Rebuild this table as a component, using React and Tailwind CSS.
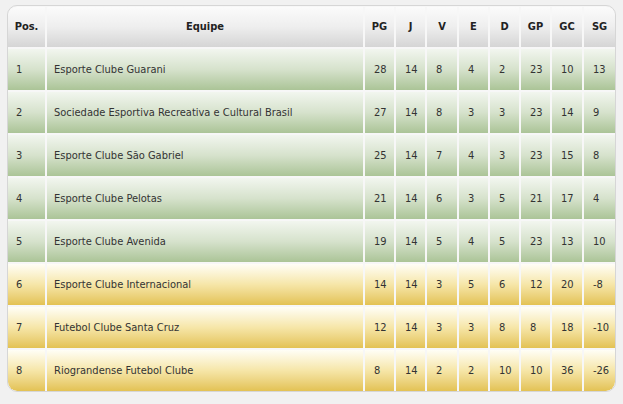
import React from "react";

const teams = [
  { pos: 1, name: "Esporte Clube Guarani", pg: 28, j: 14, v: 8, e: 4, d: 2, gp: 23, gc: 10, sg: 13 },
  { pos: 2, name: "Sociedade Esportiva Recreativa e Cultural Brasil", pg: 27, j: 14, v: 8, e: 3, d: 3, gp: 23, gc: 14, sg: 9 },
  { pos: 3, name: "Esporte Clube São Gabriel", pg: 25, j: 14, v: 7, e: 4, d: 3, gp: 23, gc: 15, sg: 8 },
  { pos: 4, name: "Esporte Clube Pelotas", pg: 21, j: 14, v: 6, e: 3, d: 5, gp: 21, gc: 17, sg: 4 },
  { pos: 5, name: "Esporte Clube Avenida", pg: 19, j: 14, v: 5, e: 4, d: 5, gp: 23, gc: 13, sg: 10 },
  { pos: 6, name: "Esporte Clube Internacional", pg: 14, j: 14, v: 3, e: 5, d: 6, gp: 12, gc: 20, sg: -8 },
  { pos: 7, name: "Futebol Clube Santa Cruz", pg: 12, j: 14, v: 3, e: 3, d: 8, gp: 8, gc: 18, sg: -10 },
  { pos: 8, name: "Riograndense Futebol Clube", pg: 8, j: 14, v: 2, e: 2, d: 10, gp: 10, gc: 36, sg: -26 },
];

const headers = ["Pos.", "Equipe", "PG", "J", "V", "E", "D", "GP", "GC", "SG"];

export default function App() {
  return (
    <div className="min-h-[404px] w-[623px] bg-[#f1f1f1] pt-[5px] pl-[7px] font-['DejaVu_Sans_Condensed','DejaVu_Sans',sans-serif] text-[11px] text-[#333]">
      <div className="w-[609px] rounded-[10px] border border-[#d6d6d6] bg-[#f7f7f7] pt-[1px] overflow-hidden">
        <div className="grid grid-cols-[37px_316px_29px_29px_30px_29px_29px_29px_30px_31px] gap-[2px]">
          {/* Header */}
          {headers.map((h, i) => (
            <div
              key={h}
              className={
                "h-[40px] flex items-center justify-center font-bold text-[#222] bg-linear-to-b from-[#fbfbfb] via-[#eeeeee] to-[#d5d5d5] " +
                (i === 0 ? "rounded-tl-[9px]" : "") +
                (i === headers.length - 1 ? "rounded-tr-[9px]" : "")
              }
            >
              {h}
            </div>
          ))}

          {/* Rows */}
          {teams.map((t, r) => {
            const green = t.pos <= 5;
            const bg = green
              ? "bg-linear-to-b from-[#f2f6ef] via-[#d6e2cc] to-[#abc497]"
              : "bg-linear-to-b from-[#fffef6] via-[#f6e6a8] to-[#e3c253]";
            const last = r === teams.length - 1;
            const vals = [t.pos, t.name, t.pg, t.j, t.v, t.e, t.d, t.gp, t.gc, t.sg];
            return vals.map((v, i) => (
              <div
                key={t.pos + "-" + i}
                className={
                  "h-[41px] flex items-center pt-[1px] whitespace-nowrap " +
                  bg +
                  (i === 1 ? " pl-[7px]" : i === 0 ? " pl-[8px]" : " pl-[9px]") +
                  (last && i === 0 ? " rounded-bl-[9px]" : "") +
                  (last && i === vals.length - 1 ? " rounded-br-[9px]" : "")
                }
              >
                {v}
              </div>
            ));
          })}
        </div>
      </div>
    </div>
  );
}
